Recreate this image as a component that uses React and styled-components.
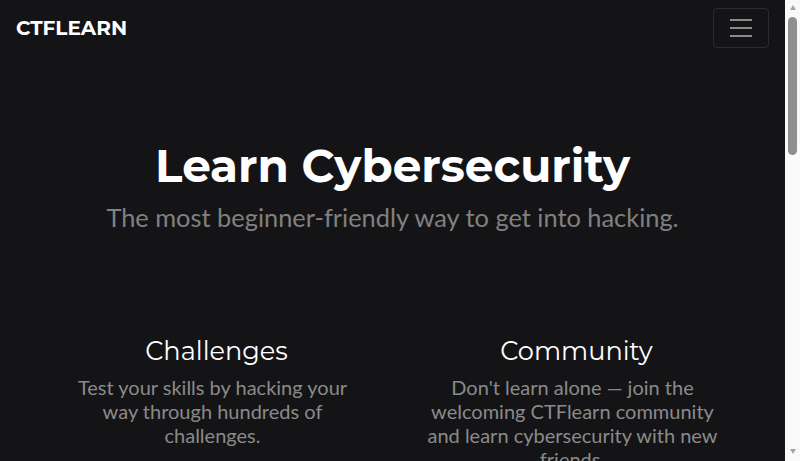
import styled, { createGlobalStyle } from "styled-components";

const GlobalStyle = createGlobalStyle`
  html, body {
    margin: 0;
    padding: 0;
    background-color: #141416;
  }
  body {
    font-family: "Lato", "Liberation Sans", sans-serif;
    color: #ffffff;
  }
  * {
    box-sizing: border-box;
  }
`;

const Page = styled.div`
  display: flex;
  height: 100vh;
  overflow: hidden;
  background-color: #141416;
`;

const Main = styled.main`
  flex: 1;
  min-width: 0;
  overflow: hidden;
`;

// stand-in for the browser scrollbar seen in the reference
const ScrollTrack = styled.div`
  width: 15px;
  flex-shrink: 0;
  display: flex;
  flex-direction: column;
  align-items: center;
  background-color: #f9f9f9;
  padding: 5px 0 7px;
`;

const Arrow = styled.div`
  width: 0;
  height: 0;
  border-left: 3.5px solid transparent;
  border-right: 3.5px solid transparent;
  ${(props) =>
    props.down
      ? "border-top: 5px solid #a3a3a3; margin-top: auto;"
      : "border-bottom: 5px solid #a3a3a3;"}
`;

const Thumb = styled.div`
  width: 9px;
  height: 138px;
  margin-top: 7px;
  border-radius: 5px;
  background-color: #8f8f8f;
`;

const Navbar = styled.nav`
  display: flex;
  align-items: center;
  justify-content: space-between;
  height: 56px;
  padding: 8px 16px;
`;

const Brand = styled.a`
  font-family: "Montserrat", "DejaVu Sans", sans-serif;
  font-weight: 700;
  font-size: 20px;
  color: #ffffff;
  text-decoration: none;
`;

const Toggler = styled.button`
  width: 56px;
  height: 40px;
  display: flex;
  align-items: center;
  justify-content: center;
  background: transparent;
  border: 1px solid rgba(255, 255, 255, 0.1);
  border-radius: 4px;
  padding: 0;
`;

const Hero = styled.header`
  display: flex;
  flex-direction: column;
  align-items: center;
  padding-top: 83px;
  padding-bottom: 104px;
  text-align: center;
`;

const Title = styled.h1`
  margin: 0;
  font-family: "Montserrat", "DejaVu Sans", sans-serif;
  font-weight: 700;
  font-size: 45.3px;
  line-height: 1.2;
  color: #ffffff;
`;

const Lead = styled.p`
  margin: 9px 0 0;
  font-family: "Lato", sans-serif;
  font-size: 25.4px;
  font-weight: 400;
  color: #808080;
`;

const Container = styled.div`
  width: 720px;
  margin: 0 auto;
  display: grid;
  grid-template-columns: 1fr 1fr;
`;

const Feature = styled.section`
  padding: 0 30px;
  text-align: center;
  margin-bottom: 40px;
`;

const FeatureTitle = styled.h3`
  margin: 0 0 8px;
  padding-left: 8px;
  font-family: "Montserrat", "DejaVu Sans", sans-serif;
  font-weight: 400;
  font-size: 25.6px;
  line-height: 1.2;
  color: #ffffff;
`;

const FeatureText = styled.p`
  margin: 0;
  font-family: "Lato", sans-serif;
  font-size: 20px;
  line-height: 24px;
  color: #8a8a8a;
`;

const features = [
  {
    title: "Challenges",
    text: "Test your skills by hacking your way through hundreds of challenges.",
  },
  {
    title: "Community",
    text: "Don't learn alone \u2014 join the welcoming CTFlearn community and learn cybersecurity with new friends.",
  },
  {
    title: "Write-ups",
    text: "Stuck on a challenge? Read write-ups from other hackers and learn new techniques.",
  },
  {
    title: "Create",
    text: "Make your own challenges and share them with thousands of players.",
  },
];

const App = () => (
  <Page>
    <GlobalStyle />
    <Main>
      <Navbar>
        <Brand href="#">CTFLEARN</Brand>
        <Toggler aria-label="Toggle navigation">
          <svg width="30" height="30" viewBox="0 0 30 30">
            <path
              stroke="rgba(255,255,255,0.5)"
              strokeLinecap="butt"
              strokeWidth="2"
              d="M4 7h22M4 15h22M4 23h22"
            />
          </svg>
        </Toggler>
      </Navbar>
      <Hero>
        <Title>Learn Cybersecurity</Title>
        <Lead>The most beginner-friendly way to get into hacking.</Lead>
      </Hero>
      <Container>
        {features.map((f) => (
          <Feature key={f.title}>
            <FeatureTitle>{f.title}</FeatureTitle>
            <FeatureText>{f.text}</FeatureText>
          </Feature>
        ))}
      </Container>
    </Main>
    <ScrollTrack>
      <Arrow />
      <Thumb />
      <Arrow down />
    </ScrollTrack>
  </Page>
);

export default App;
